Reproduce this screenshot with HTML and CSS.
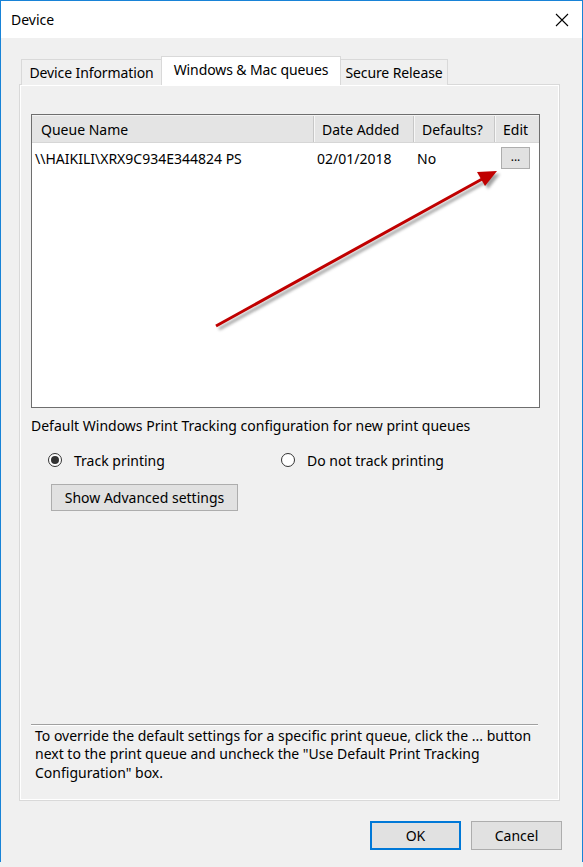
FILE: index.html
```html
<!DOCTYPE html>
<html>
<head>
<meta charset="utf-8">
<title>Device</title>
<link rel="stylesheet" href="styles.css">
</head>
<body>
<div class="window">
  <div class="titlebar">
    <span class="title">Device</span>
    <svg class="close" width="14" height="14" viewBox="0 0 14 14"><path d="M1 1 L13 13 M13 1 L1 13" stroke="#000" stroke-width="1.1" fill="none"/></svg>
  </div>
  <div class="content">
    <div class="tabs">
      <div class="tab tab-first">Device Information</div>
      <div class="tab tab-active">Windows &amp; Mac queues</div>
      <div class="tab tab-last">Secure Release</div>
    </div>
    <div class="panel">
      <div class="list">
        <div class="list-head">
          <div class="hcell c1">Queue Name</div>
          <div class="hcell c2">Date Added</div>
          <div class="hcell c3">Defaults?</div>
          <div class="hcell c4">Edit</div>
        </div>
        <div class="list-row">
          <div class="cell c1">\\HAIKILI\XRX9C934E344824 PS</div>
          <div class="cell c2">02/01/2018</div>
          <div class="cell c3">No</div>
          <div class="cell c4"><span class="dots-btn">...</span></div>
        </div>
        <svg class="arrow" width="509" height="294" viewBox="0 0 509 294">
          <defs>
            <filter id="sh" x="-20%" y="-20%" width="140%" height="140%">
              <feGaussianBlur stdDeviation="1.4"/>
            </filter>
          </defs>
          <g transform="translate(3,3)" filter="url(#sh)" opacity="0.55">
            <line x1="184" y1="211" x2="452" y2="63" stroke="#555" stroke-width="3"/>
            <polygon points="465,56 445,57 453,71" fill="#555"/>
          </g>
          <line x1="184" y1="211" x2="452" y2="63" stroke="#c00000" stroke-width="3"/>
          <polygon points="465,56 445,57 453,71" fill="#c00000"/>
        </svg>
      </div>
      <div class="caption">Default Windows Print Tracking configuration for new print queues</div>
      <div class="radios">
        <label class="radio radio-a"><span class="dot checked"></span>Track printing</label>
        <label class="radio radio-b"><span class="dot"></span>Do not track printing</label>
      </div>
      <div class="adv-row"><span class="btn adv">Show Advanced settings</span></div>
      <div class="note">
        <p>To override the default settings for a specific print queue, click the ... button next to the print queue and uncheck the "Use Default Print Tracking Configuration" box.</p>
      </div>
    </div>
    <div class="buttons">
      <span class="btn dlg ok">OK</span>
      <span class="btn dlg">Cancel</span>
    </div>
  </div>
</div>
</body>
</html>
```
FILE: styles.css
```css
* { box-sizing: border-box; }
html, body { margin: 0; padding: 0; background: #f0f0f0; }
body {
  font-family: "Noto Sans", "Open Sans", sans-serif;
  font-size: 14px;
  color: #000;
}
.window {
  width: 583px;
  height: 862px;
  background: #f0f0f0;
  border-top: 1px solid #1883d7;
  border-left: 1px solid #1883d7;
  border-right: 1px solid #1883d7;
}
.titlebar {
  height: 37px;
  background: #fff;
  display: flex;
  align-items: center;
  justify-content: space-between;
  padding: 0 13px 0 10px;
}
.title { font-size: 14px; }
.close { display: block; }
.content {
  padding: 19px 22px 0 18px;
}
.tabs {
  display: flex;
  align-items: flex-end;
  height: 28px;
  padding-left: 2px;
  position: relative;
  z-index: 1;
  margin-bottom: -1px;
}
.tab {
  height: 26px;
  border: 1px solid #d9d9d9;
  border-bottom: none;
  background: #f0f0f0;
  display: flex;
  align-items: center;
  justify-content: center;
  white-space: nowrap;
  letter-spacing: -0.1px;
}
.tab-first { width: 140px; border-right: none; }
.tab-active {
  width: 180px;
  height: 29px;
  background: #fff;
  padding-bottom: 4px;
}
.tab-last { width: 107px; border-left: none; }
.panel {
  width: 541px;
  height: 717px;
  border: 1px solid #d9d9d9;
  box-shadow: inset 1px 1px 0 #fff, inset -1px -1px 0 #fff;
  padding: 29px 19px 0 11px;
  display: flex;
  flex-direction: column;
}
.list {
  position: relative;
  width: 509px;
  height: 294px;
  background: #fff;
  border: 1px solid #6e6e6e;
}
.list-head {
  display: flex;
  height: 28px;
  background: #e4e4e4;
  border-top: 1px solid #f4f4f4;
  border-bottom: 1px solid #d6d6d6;
}
.hcell {
  display: flex;
  align-items: center;
  padding-left: 8px;
  border-left: 1px solid #c7c7c7;
  box-shadow: inset 1px 0 0 #f7f7f7;
  white-space: nowrap;
}
.hcell.c1 { border-left: none; box-shadow: none; padding-left: 9px; }
.c1 { width: 281px; }
.c2 { width: 100px; }
.c3 { width: 81px; }
.c4 { width: 45px; }
.hcell.c4 { padding-left: 8px; }
.list-row {
  display: flex;
  height: 30px;
  align-items: center;
}
.cell {
  padding-left: 4px;
  white-space: nowrap;
}
.cell.c1 { padding-left: 3px; }
.cell.c4 { padding-left: 7px; }
.dots-btn {
  display: flex;
  align-items: center;
  justify-content: center;
  width: 29px;
  height: 22px;
  background: #e1e1e1;
  border: 1px solid #adadad;
  font-size: 12px;
  padding-bottom: 4px;
}
.arrow {
  position: absolute;
  left: 0;
  top: 0;
  overflow: visible;
  pointer-events: none;
}
.caption {
  margin-top: 9px;
  line-height: 18px;
  white-space: nowrap;
}
.radios {
  margin-top: 16px;
  display: flex;
  height: 18px;
  align-items: center;
}
.radio {
  display: flex;
  align-items: center;
  gap: 12px;
}
.radio-a { margin-left: 17px; width: 233px; }
.dot {
  width: 14px;
  height: 14px;
  border-radius: 50%;
  border: 1px solid #333;
  background: #fff;
  display: flex;
  align-items: center;
  justify-content: center;
}
.dot.checked::after {
  content: "";
  width: 8px;
  height: 8px;
  border-radius: 50%;
  background: #333;
}
.adv-row {
  margin-top: 15px;
  padding-left: 20px;
  display: flex;
}
.btn {
  display: flex;
  align-items: center;
  justify-content: center;
  background: #e1e1e1;
  border: 1px solid #adadad;
  white-space: nowrap;
}
.adv {
  width: 187px;
  height: 27px;
}
.note {
  margin-top: auto;
  margin-bottom: 18px;
  width: 507px;
  border-top: 1px solid #a0a0a0;
  box-shadow: inset 0 1px 0 #fff;
  padding: 2px 0 0 4px;
}
.note p {
  margin: 0;
  line-height: 18.5px;
  width: 500px;
}
.buttons {
  display: flex;
  justify-content: flex-end;
  gap: 10px;
  margin-top: 20px;
  margin-right: -2px;
}
.dlg {
  width: 91px;
  height: 29px;
}
.ok {
  width: 91px;
  border: 2px solid #0078d7;
}
```
